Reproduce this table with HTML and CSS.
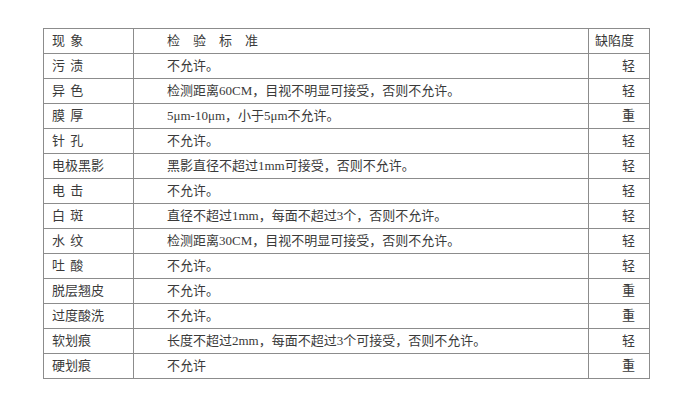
FILE: index.html
```html
<!DOCTYPE html>
<html lang="zh-CN">
<head>
<meta charset="utf-8">
<link rel="stylesheet" href="styles.css">
</head>
<body>
<table class="spec">
  <colgroup>
    <col class="c-name">
    <col class="c-std">
    <col class="c-lvl">
  </colgroup>
  <thead>
    <tr>
      <th class="name">现 象</th>
      <th class="std">检　验　标　准</th>
      <th class="lvl-head">缺陷度</th>
    </tr>
  </thead>
  <tbody>
    <tr><td class="name">污 渍</td><td class="std">不允许。</td><td class="lvl">轻</td></tr>
    <tr><td class="name">异 色</td><td class="std">检测距离60CM，目视不明显可接受，否则不允许。</td><td class="lvl">轻</td></tr>
    <tr><td class="name">膜 厚</td><td class="std">5μm-10μm，小于5μm不允许。</td><td class="lvl">重</td></tr>
    <tr><td class="name">针 孔</td><td class="std">不允许。</td><td class="lvl">轻</td></tr>
    <tr><td class="name">电极黑影</td><td class="std">黑影直径不超过1mm可接受，否则不允许。</td><td class="lvl">轻</td></tr>
    <tr><td class="name">电 击</td><td class="std">不允许。</td><td class="lvl">轻</td></tr>
    <tr><td class="name">白 斑</td><td class="std">直径不超过1mm，每面不超过3个，否则不允许。</td><td class="lvl">轻</td></tr>
    <tr><td class="name">水 纹</td><td class="std">检测距离30CM，目视不明显可接受，否则不允许。</td><td class="lvl">轻</td></tr>
    <tr><td class="name">吐 酸</td><td class="std">不允许。</td><td class="lvl">轻</td></tr>
    <tr><td class="name">脱层翘皮</td><td class="std">不允许。</td><td class="lvl">重</td></tr>
    <tr><td class="name">过度酸洗</td><td class="std">不允许。</td><td class="lvl">重</td></tr>
    <tr><td class="name">软划痕</td><td class="std">长度不超过2mm，每面不超过3个可接受，否则不允许。</td><td class="lvl">轻</td></tr>
    <tr><td class="name">硬划痕</td><td class="std">不允许</td><td class="lvl">重</td></tr>
  </tbody>
</table>
</body>
</html>
```
FILE: styles.css
```css
html, body {
  margin: 0;
  padding: 0;
  background: #ffffff;
}

body {
  font-family: "Liberation Serif", "Noto Sans CJK SC", serif;
  font-size: 13px;
  color: #3a3a3a;
}

.spec {
  border-collapse: collapse;
  margin: 28px 0 0 43px;
  table-layout: fixed;
  width: 606px;
}

.c-name { width: 90px; }
.c-std { width: 455px; }
.c-lvl { width: 61px; }

.spec th,
.spec td {
  border: 1px solid #8c8c8c;
  height: 24px;
  padding: 0;
  font-weight: normal;
  text-align: left;
  vertical-align: middle;
  line-height: 16px;
  white-space: nowrap;
}

.spec .name {
  padding-left: 8px;
  word-spacing: 2px;
}

.spec .std {
  padding-left: 33px;
}

.spec .lvl-head {
  padding-left: 6px;
}

.spec .lvl {
  text-align: right;
  padding-right: 14px;
}
```
